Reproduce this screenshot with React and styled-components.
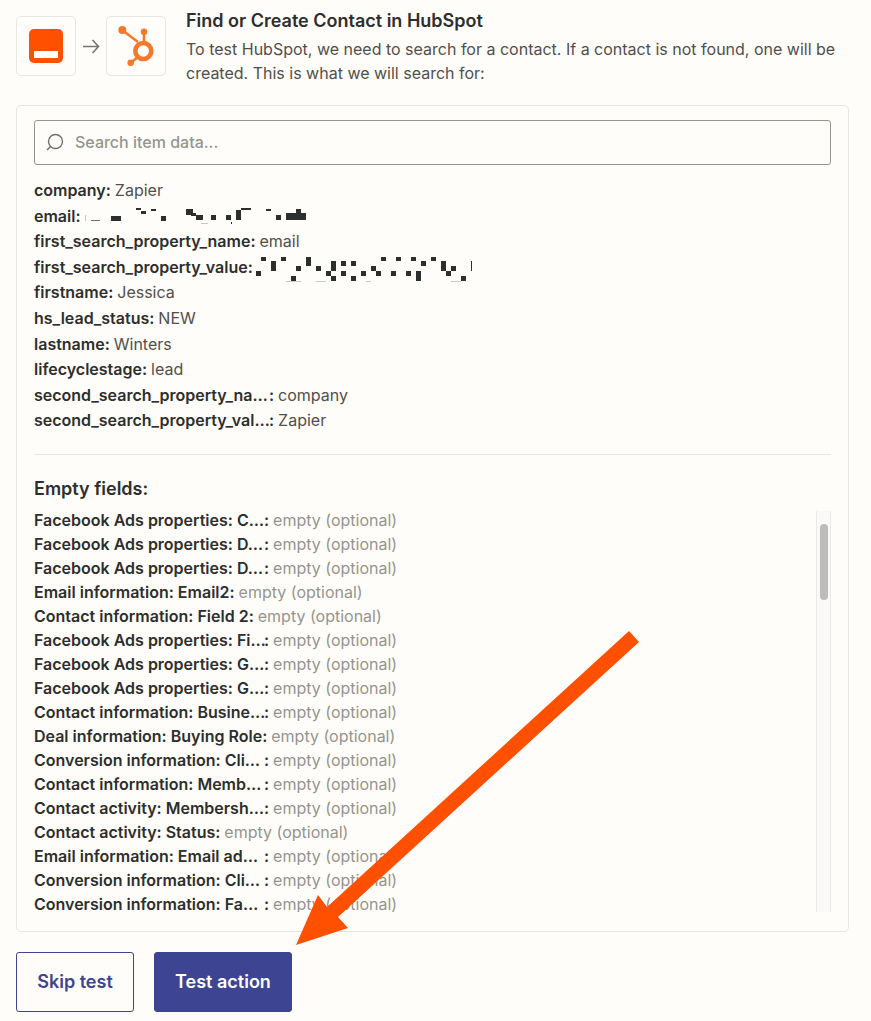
import styled, { createGlobalStyle } from "styled-components";

const GlobalStyle = createGlobalStyle`
	html, body {
		margin: 0;
		background: #fffdf9;
	}
	* {
		box-sizing: border-box;
	}
`;

const Page = styled.div`
	position: relative;
	width: 871px;
	height: 1021px;
	overflow: hidden;
	padding: 16px 22px 0 16px;
	font-family: Inter, "Liberation Sans", sans-serif;
	color: #2d2e2e;
`;

const Header = styled.header`
	display: flex;
	align-items: flex-start;
	height: 89px;
`;

const IconBox = styled.div`
	width: 60px;
	height: 60px;
	flex: none;
	display: flex;
	align-items: center;
	justify-content: center;
	border: 1px solid #e8e6e2;
	border-radius: 5px;
	background: #fffdf9;
`;

const ArrowSlot = styled.div`
	width: 30px;
	height: 60px;
	flex: none;
	display: flex;
	align-items: center;
	justify-content: center;
`;

const HeaderText = styled.div`
	margin-left: 20px;
	margin-top: -7px;
`;

const Title = styled.h1`
	margin: 0 0 4px;
	font-size: 18px;
	line-height: 24px;
	font-weight: 600;
`;

const Description = styled.p`
	margin: 0;
	font-size: 16px;
	line-height: 24px;
	color: #504f4d;
`;

const Panel = styled.section`
	height: 827px;
	border: 1px solid #e8e6e2;
	border-radius: 5px;
	padding: 14px 17px 0;
`;

const SearchBar = styled.div`
	height: 45px;
	display: flex;
	align-items: center;
	gap: 10px;
	padding: 0 10px 1px;
	border: 1px solid #95948f;
	border-radius: 3px;
	color: #95948f;
	font-size: 16px;
	font-weight: 500;
`;

const PropertyList = styled.div`
	margin-top: 12.2px;
`;

const Row = styled.div`
	display: flex;
	align-items: center;
	height: ${(p) => p.$height}px;
	font-size: 16px;
	white-space: nowrap;
`;

const Key = styled.span`
	flex: none;
	width: ${(p) => (p.$width ? `${p.$width}px` : "auto")};
	font-weight: 600;
`;

const Colon = styled.span`
	font-weight: 600;
	margin-right: ${(p) => (p.$tight ? 2 : 4)}px;
`;

const Value = styled.span`
	color: ${(p) => (p.$muted ? "#95948f" : "#504f4d")};
`;

const Divider = styled.hr`
	margin: 20.8px 0 0;
	border: 0;
	border-top: 1px solid #e8e6e2;
`;

const EmptyTitle = styled.h2`
	margin: 22px 0 10px;
	font-size: 18px;
	line-height: 24px;
	font-weight: 600;
`;

const EmptyArea = styled.div`
	position: relative;
	height: 401px;
	overflow: hidden;
`;

const EmptyList = styled.div`
	margin-top: -3px;
`;

const ScrollTrack = styled.div`
	position: absolute;
	top: 0;
	right: 0;
	bottom: 0;
	width: 15px;
	background: #faf9f8;
	border-left: 1px solid #ebe9e6;
	border-right: 1px solid #ebe9e6;
`;

const ScrollThumb = styled.div`
	position: absolute;
	top: 13px;
	left: 3px;
	width: 8px;
	height: 76px;
	border-radius: 4px;
	background: #bdbcba;
`;

const Actions = styled.div`
	display: flex;
	gap: 20px;
	margin-top: 20px;
`;

const Button = styled.button`
	height: 60px;
	width: ${(p) => p.$width}px;
	padding: 0 0 2px;
	border: 1px solid #3d4592;
	border-radius: 3px;
	background: ${(p) => (p.$primary ? "#3d4592" : "#fffdf9")};
	color: ${(p) => (p.$primary ? "#fffdf9" : "#3d4592")};
	font-family: inherit;
	font-size: 18px;
	font-weight: 600;
`;

const Overlay = styled.svg`
	position: absolute;
	top: 0;
	left: 0;
	pointer-events: none;
`;

const Redaction = styled.svg`
	display: block;
	flex: none;
`;

const PROPS = [
	["company", "Zapier"],
	["email", null, "email"],
	["first_search_property_name", "email"],
	["first_search_property_value", null, "value"],
	["firstname", "Jessica"],
	["hs_lead_status", "NEW"],
	["lastname", "Winters"],
	["lifecyclestage", "lead"],
	["second_search_property_na…", "company"],
	["second_search_property_val…", "Zapier"],
];

const EMPTY = [
	"Facebook Ads properties: C…",
	"Facebook Ads properties: D…",
	"Facebook Ads properties: D…",
	"Email information: Email2",
	"Contact information: Field 2",
	"Facebook Ads properties: Fi…",
	"Facebook Ads properties: G…",
	"Facebook Ads properties: G…",
	"Contact information: Busine…",
	"Deal information: Buying Role",
	"Conversion information: Cli…",
	"Contact information: Memb…",
	"Contact activity: Membersh…",
	"Contact activity: Status",
	"Email information: Email ad…",
	"Conversion information: Cli…",
	"Conversion information: Fa…",
];

const isCut = (label) => label.endsWith("…");

// pixelated cover over the address, [x, y, w, h, colour]
const DARK = "#2d2e2e";
const SOFT = "#c9c8c5";

const EMAIL_BLOCKS = [
	[84, 215, 1, 6, SOFT], [90, 220, 9, 1, "#6f6e6b"], [110, 216, 10, 5, DARK], [135, 208, 5, 2, DARK],
	[140, 211, 5, 3, DARK], [150, 209, 5, 2, DARK], [160, 216, 5, 5, DARK], [185, 209, 7, 6, DARK],
	[190, 213, 5, 3, DARK], [195, 215, 7, 5, DARK], [200, 223, 7, 1, SOFT], [210, 215, 5, 5, DARK],
	[225, 215, 5, 5, DARK], [230, 222, 1, 2, DARK], [235, 210, 5, 10, DARK], [240, 208, 10, 2, DARK],
	[265, 209, 5, 2, DARK], [275, 215, 5, 5, DARK], [285, 213, 20, 7, DARK], [295, 209, 5, 5, DARK],
];

const VALUE_BLOCKS = [
	[260, 257, 5, 4, DARK], [270, 261, 5, 10, DARK], [280, 257, 5, 4, DARK], [255, 271, 5, 5, DARK],
	[295, 266, 5, 5, DARK], [290, 276, 5, 5, DARK], [305, 257, 5, 9, DARK], [315, 266, 5, 5, DARK],
	[325, 271, 5, 5, DARK], [330, 261, 5, 10, DARK], [330, 276, 5, 5, DARK], [340, 261, 5, 5, DARK],
	[340, 271, 5, 5, DARK], [350, 261, 5, 5, DARK], [350, 276, 5, 5, DARK], [360, 271, 5, 5, DARK],
	[370, 266, 5, 5, DARK], [375, 271, 5, 5, DARK], [380, 257, 5, 4, DARK], [390, 271, 5, 5, DARK],
	[395, 257, 5, 4, DARK], [405, 271, 5, 5, DARK], [410, 257, 5, 4, DARK], [415, 271, 5, 10, DARK],
	[420, 261, 5, 5, DARK], [430, 257, 5, 4, DARK], [440, 261, 5, 10, DARK], [445, 271, 5, 5, DARK],
	[450, 266, 5, 5, DARK], [460, 276, 5, 5, DARK], [470, 261, 1, 10, DARK],
	[285, 281, 15, 1, SOFT], [315, 281, 10, 1, SOFT], [365, 281, 5, 1, SOFT], [450, 281, 10, 1, SOFT],
];

function Blocks({ width, height, x, y, blocks }) {
	return (
		<Redaction width={width} height={height} viewBox={`${x} ${y} ${width} ${height}`}>
			{blocks.map(([bx, by, bw, bh, fill]) => (
				<rect key={`${bx}-${by}`} x={bx} y={by} width={bw} height={bh} fill={fill} />
			))}
		</Redaction>
	);
}

function HubSpotLogo() {
	return (
		<svg width="48" height="48" viewBox="0 0 48 48" fill="none" stroke="#f5792a">
			<circle cx="31.3" cy="29" r="8" strokeWidth="4.6" />
			<path d="M10 8l16 12M32 10v11M18.7 40.7l7.3-5.7" strokeWidth="2.6" />
			<circle cx="10.3" cy="8" r="4" fill="#f5792a" stroke="none" />
			<circle cx="32" cy="9.7" r="3.3" fill="#f5792a" stroke="none" />
			<circle cx="18.7" cy="40.7" r="3.3" fill="#f5792a" stroke="none" />
		</svg>
	);
}

export default function App() {
	return (
		<Page>
			<GlobalStyle />
			<Header>
				<IconBox>
					<svg width="34" height="34" viewBox="0 0 34 34">
						<rect width="34" height="34" rx="5" fill="#ff4f00" />
						<rect x="5" y="22" width="24" height="7" fill="#fffdf9" />
					</svg>
				</IconBox>
				<ArrowSlot>
					<svg width="17" height="15" viewBox="0 0 17 15" fill="none" stroke="#767573" strokeWidth="1.6">
						<path d="M0 7.5h15.5M9.5 1l6 6.5-6 6.5" />
					</svg>
				</ArrowSlot>
				<IconBox>
					<HubSpotLogo />
				</IconBox>
				<HeaderText>
					<Title>Find or Create Contact in HubSpot</Title>
					<Description>
						To test HubSpot, we need to search for a contact. If a contact is not found, one will be
						<br />
						created. This is what we will search for:
					</Description>
				</HeaderText>
			</Header>
			<Panel>
				<SearchBar>
					<svg width="20" height="20" viewBox="0 0 20 20" fill="none" stroke="#6f6e6b" strokeWidth="1.4">
						<circle cx="10.5" cy="9.5" r="7" />
						<path d="M5.5 14.5 2 18" />
					</svg>
					Search item data...
				</SearchBar>
				<PropertyList>
					{PROPS.map(([key, value, redacted]) => (
						<Row key={key} $height={25.6}>
							<Key $width={isCut(key) ? 235 : undefined}>{key}</Key>
							<Colon $tight={redacted === "value"}>:</Colon>
							{value && <Value>{value}</Value>}
							{redacted === "email" && <Blocks width={224} height={20} x={84} y={206} blocks={EMAIL_BLOCKS} />}
							{redacted === "value" && <Blocks width={220} height={30} x={254} y={252} blocks={VALUE_BLOCKS} />}
						</Row>
					))}
				</PropertyList>
				<Divider />
				<EmptyTitle>Empty fields:</EmptyTitle>
				<EmptyArea>
					<EmptyList>
						{EMPTY.map((label, i) => (
							<Row key={i} $height={24}>
								<Key $width={isCut(label) ? 230 : undefined}>{label}</Key>
								<Colon>:</Colon>
								<Value $muted>empty (optional)</Value>
							</Row>
						))}
					</EmptyList>
					<ScrollTrack>
						<ScrollThumb />
					</ScrollTrack>
				</EmptyArea>
			</Panel>
			<Actions>
				<Button $width={118}>Skip test</Button>
				<Button $primary $width={138}>Test action</Button>
			</Actions>
			<Overlay width="871" height="1021" viewBox="0 0 871 1021">
				<polygon points="629,631 639,642 338,917 348,928 296,945 318,895 327,907" fill="#ff4f00" />
			</Overlay>
		</Page>
	);
}
